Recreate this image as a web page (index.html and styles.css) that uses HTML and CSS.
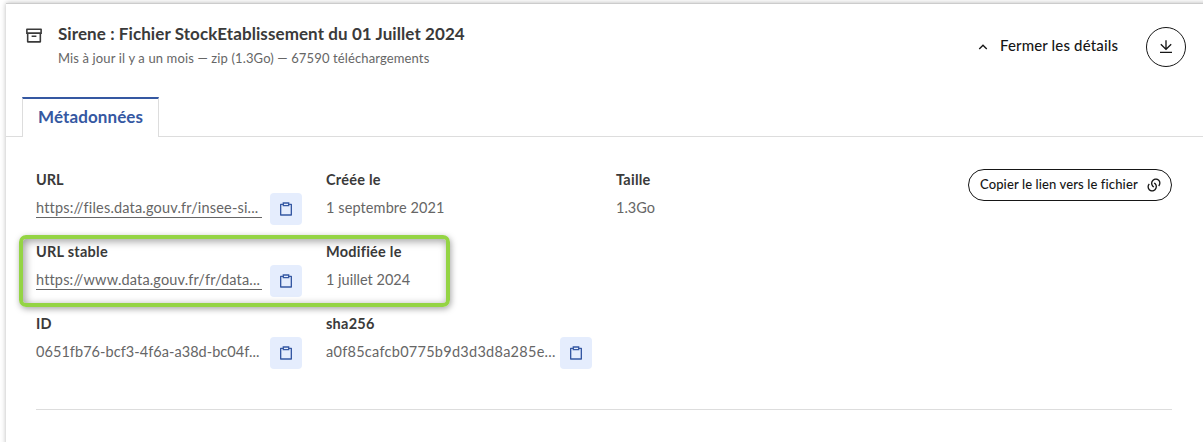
FILE: index.html
```html
<!DOCTYPE html>
<html lang="fr">
<head>
<meta charset="utf-8">
<title>Sirene : Fichier StockEtablissement</title>
<link rel="stylesheet" href="styles.css">
</head>
<body>
<svg class="sprite" aria-hidden="true">
  <symbol id="clipboard" viewBox="0 0 24 24"><path d="M7 4V2H17V4H20.0066C20.5552 4 21 4.44495 21 4.9934V21.0066C21 21.5552 20.5551 22 20.0066 22H3.9934C3.44476 22 3 21.5551 3 21.0066V4.9934C3 4.44476 3.44495 4 3.9934 4H7ZM7 6H5V20H19V6H17V8H7V6ZM9 4V6H15V4H9Z"/></symbol>
</svg>
<article class="card">
  <header class="card-header">
    <svg class="icon-archive" viewBox="0 0 24 24"><path d="M3 10H2V4.003C2 3.449 2.455 3 2.992 3H21.008C21.556 3 22 3.438 22 4.003V10H21V20.001C21 20.552 20.553 21 20.002 21H3.998C3.447 21 3 20.552 3 20.001V10ZM19 10H5V19H19V10ZM4 5V8H20V5H4ZM9 12H15V14H9V12Z"/></svg>
    <div class="heading">
      <h1 class="title"><span>Sirene : Fichier StockEtablissement du 01 Juillet 2024</span></h1>
      <p class="subtitle"><span>Mis à jour il y a un mois — zip (1.3Go) — 67590 téléchargements</span></p>
    </div>
    <button class="toggle">
      <svg class="icon" viewBox="0 0 24 24"><path d="M12 10.828L7.05 15.778L5.636 14.364L12 8L18.364 14.364L16.95 15.778Z"/></svg>
      <span class="toggle-label">Fermer les détails</span>
    </button>
    <button class="download" aria-label="Télécharger">
      <svg class="icon" viewBox="0 0 24 24"><path d="M3 19H21V21H3V19ZM13 13.172L19.071 7.1L20.485 8.514L12 17L3.515 8.515L4.929 7.1L11 13.17V2H13V13.172Z"/></svg>
    </button>
  </header>
  <nav class="tabs"><button class="tab"><span>Métadonnées</span></button></nav>
  <section class="panel">
    <div class="details">
      <dl class="grid">
        <div class="field">
          <dt class="label l-url">URL</dt>
          <dd class="value"><a class="link"><span class="v-url">https://files.data.gouv.fr/insee-si...</span></a><button class="copy"><svg class="icon"><use href="#clipboard"/></svg></button></dd>
        </div>
        <div class="field">
          <dt class="label">Créée le</dt>
          <dd class="value"><span class="v-created">1 septembre 2021</span></dd>
        </div>
        <div class="field">
          <dt class="label">Taille</dt>
          <dd class="value"><span>1.3Go</span></dd>
        </div>
        <div class="field">
          <dt class="label">URL stable</dt>
          <dd class="value"><a class="link"><span class="v-stable">https://www.data.gouv.fr/fr/data...</span></a><button class="copy"><svg class="icon"><use href="#clipboard"/></svg></button></dd>
        </div>
        <div class="field">
          <dt class="label">Modifiée le</dt>
          <dd class="value"><span>1 juillet 2024</span></dd>
        </div>
        <div class="field field-id">
          <dt class="label">ID</dt>
          <dd class="value"><span class="text v-id">0651fb76-bcf3-4f6a-a38d-bc04f...</span><button class="copy"><svg class="icon"><use href="#clipboard"/></svg></button></dd>
        </div>
        <div class="field">
          <dt class="label">sha256</dt>
          <dd class="value"><span class="text v-sha">a0f85cafcb0775b9d3d3d8a285e...</span><button class="copy"><svg class="icon"><use href="#clipboard"/></svg></button></dd>
        </div>
      </dl>
      <button class="copy-link"><span class="copy-link-label">Copier le lien vers le fichier</span>
        <svg class="icon" viewBox="0 0 24 24"><path d="M13.0607 8.11097L14.4749 9.52518C17.2086 12.2589 17.2086 16.691 14.4749 19.4247L14.1214 19.7782C11.3877 22.5119 6.95555 22.5119 4.22188 19.7782C1.48821 17.0446 1.48821 12.6124 4.22188 9.87874L5.6361 11.293C3.68348 13.2456 3.68348 16.4114 5.6361 18.364C7.58872 20.3166 10.7545 20.3166 12.7072 18.364L13.0607 18.0105C15.0133 16.0578 15.0133 12.892 13.0607 10.9394L11.6465 9.52518L13.0607 8.11097ZM19.7782 14.1214L18.364 12.7072C20.3166 10.7545 20.3166 7.58872 18.364 5.6361C16.4114 3.68348 13.2456 3.68348 11.293 5.6361L10.9394 5.98965C8.98678 7.94227 8.98678 11.1081 10.9394 13.0607L12.3536 14.4749L10.9394 15.8891L9.52518 14.4749C6.79151 11.7413 6.79151 7.30911 9.52518 4.57544L9.87874 4.22188C12.6124 1.48821 17.0446 1.48821 19.7782 4.22188C22.5119 6.95555 22.5119 11.3877 19.7782 14.1214Z"/></svg>
      </button>
    </div>
  </section>
  <div class="highlight"></div>
</article>
</body>
</html>
```
FILE: styles.css
```css
* { box-sizing: border-box; margin: 0; padding: 0; }
body {
  height: 442px;
  padding: 3px 0 0 6px;
  overflow: hidden;
  background: #fff;
  font-family: Lato, "Open Sans", sans-serif;
  color: #3a3a3a;
}
button { background: none; border: 0; font: inherit; color: inherit; white-space: nowrap; }
svg { display: block; fill: currentColor; flex: none; }
.sprite { position: absolute; width: 0; height: 0; }
.icon { width: 16px; height: 16px; }
.card {
  position: relative;
  height: 460px;
  width: 1210px;
  border-top: 1px solid #ccc;
  box-shadow: 0 0 5px rgba(0, 0, 0, .28);
}
.card-header {
  display: flex;
  align-items: flex-start;
  height: 93px;
  padding: 23px 30px 0 18px;
}
.icon-archive { width: 20px; height: 19px; margin-top: -1px; }
.heading { flex: 1; margin-left: 14px; white-space: nowrap; }
.title { margin-top: -5px; font-size: 17px; font-weight: 700; line-height: 24px; letter-spacing: .08px; }
.subtitle { margin-top: 2px; font-size: 13px; line-height: 20px; letter-spacing: .13px; color: #666; }
.toggle { display: flex; align-items: center; height: 40px; color: #161616; }
.toggle-label {
  width: 119px;
  margin: 0 27px 0 9px;
  padding-bottom: 4px;
  text-align: left;
  font-size: 15px;
  font-weight: 500;
  letter-spacing: .15px;
}
.download {
  display: grid;
  place-items: center;
  width: 40px;
  height: 40px;
  border: 1px solid #161616;
  border-radius: 50%;
  color: #161616;
}
.tabs {
  display: flex;
  height: 40px;
  padding-left: 16px;
  box-shadow: inset 0 -1px #ddd;
}
.tab {
  width: 137px;
  height: 40px;
  padding: 0 0 4px 15px;
  border: solid #ddd;
  border-width: 2px 1px 0;
  border-top-color: #3558a2;
  background: #fff;
  color: #3558a2;
  text-align: left;
  font-size: 17px;
  font-weight: 700;
  letter-spacing: .1px;
}
.panel { padding: 31px 0 0 30px; }
.details {
  display: flex;
  justify-content: space-between;
  align-items: flex-start;
  width: 1136px;
  height: 242px;
  border-bottom: 1px solid #ddd;
}
.grid { display: grid; grid-template-columns: repeat(3, 290px); grid-auto-rows: 72px; }
.field-id { grid-column: 1; }
.label { height: 24px; font-size: 14.5px; font-weight: 700; line-height: 24px; letter-spacing: .25px; white-space: nowrap; }
.l-url { letter-spacing: 0; }
.value { display: flex; align-items: flex-start; height: 32px; font-size: 14.5px; line-height: 32px; color: #666; white-space: nowrap; }
.link { width: 226px; height: 26px; border-bottom: 1px solid #666; }
.text { width: 226px; }
.v-url { letter-spacing: .18px; }
.v-created { letter-spacing: .1px; }
.v-stable { letter-spacing: .16px; }
.v-id { letter-spacing: .05px; }
.v-sha { letter-spacing: .27px; }
.copy {
  display: grid;
  place-items: center;
  width: 32px;
  height: 32px;
  margin: 1px 0 0 8px;
  border-radius: 4px;
  background: #e5edfd;
  color: #3558a2;
}
.copy-link {
  display: flex;
  align-items: center;
  width: 204px;
  height: 32px;
  margin-top: 1px;
  padding-left: 11px;
  border: 1px solid #161616;
  border-radius: 16px;
  color: #161616;
  font-size: 13px;
  font-weight: 500;
  letter-spacing: .12px;
}
.copy-link-label { width: 158px; margin-right: 8px; padding-bottom: 2px; text-align: left; }
/* Annotation frame laid over the stable URL and modification date. */
.highlight {
  position: absolute;
  left: 12.5px;
  top: 231px;
  width: 431px;
  height: 71.5px;
  border: 4px solid #94d444;
  border-radius: 7px;
  box-shadow: 1px 2px 6px rgba(0, 0, 0, .35), inset 2px 2px 8px rgba(0, 0, 0, .4);
}
```
